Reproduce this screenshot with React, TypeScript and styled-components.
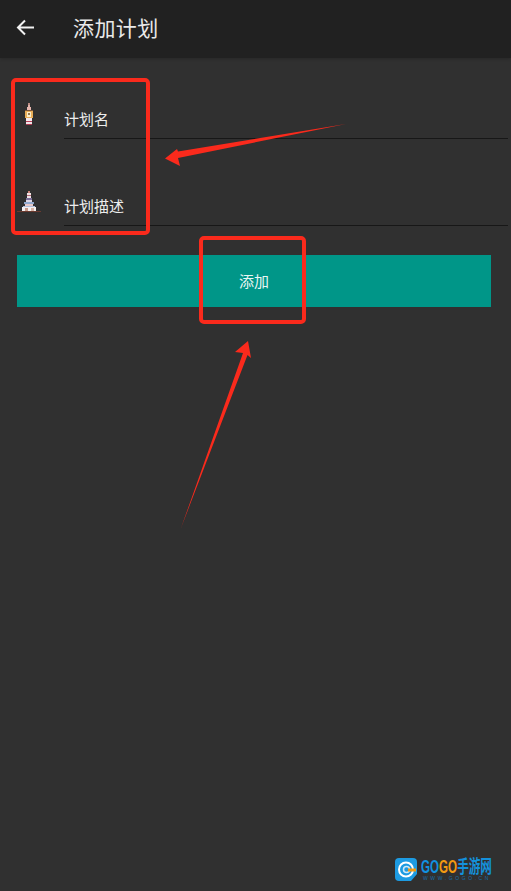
import React from "react";
import styled, { createGlobalStyle } from "styled-components";

const Global = createGlobalStyle`
  html, body { margin: 0; padding: 0; background: #303030; }
  body { font-family: "Roboto", "Noto Sans CJK SC", sans-serif; }
`;

const Screen = styled.div`
  position: relative;
  width: 511px;
  height: 891px;
  overflow: hidden;
  background: #303030;
`;

const Toolbar = styled.header`
  display: flex;
  align-items: center;
  height: 58px;
  padding-left: 16px;
  gap: 38px;
  background: #212121;
  box-shadow: 0 1px 3px rgba(0, 0, 0, 0.18);
`;

const BackIcon = styled.svg`
  width: 19px;
  height: 17px;
  flex: none;
  margin-bottom: 4px;
`;

const Title = styled.h1`
  margin: 0 0 4px;
  font: 400 21px/28px "Noto Sans CJK SC", sans-serif;
  letter-spacing: 0.4px;
  color: #e9e9e9;
`;

const Form = styled.main`
  display: flex;
  flex-direction: column;
  padding: 37px 3px 0 17px;
`;

const Row = styled.div`
  display: flex;
  height: 44px;
  margin-bottom: 43px;
`;

const PixelIcon = styled.svg`
  width: 26px;
  height: 26px;
  flex: none;
  margin: 8px 21px 0 0;
  shape-rendering: crispEdges;
  overflow: visible;
`;

const Field = styled.div`
  flex: 1;
  box-sizing: border-box;
  height: 44px;
  padding: 12px 0 0;
  border-bottom: 1px solid #171717;
  font: 400 15px/24px "Noto Sans CJK SC", sans-serif;
  color: #ececec;
`;

const SubmitButton = styled.button`
  display: block;
  width: 474px;
  height: 52px;
  margin: -14px 0 0;
  padding: 0;
  border: 0;
  background: #009688;
  color: #e8f5f3;
  font: 400 15px/52px "Noto Sans CJK SC", sans-serif;
`;

const Annotations = styled.svg`
  position: absolute;
  inset: 0;
  width: 511px;
  height: 891px;
  pointer-events: none;
`;

const Watermark = styled.div`
  position: absolute;
  left: 395px;
  top: 858px;
  display: flex;
  gap: 3px;
`;

const LogoMark = styled.svg`
  width: 22px;
  height: 23px;
  flex: none;
`;

const BrandColumn = styled.div`
  display: flex;
  flex-direction: column;
  margin-left: 1px;
`;

const BrandName = styled.div`
  display: flex;
  width: 110px;
  margin-top: 1px;
  font: 700 18px/16px "Liberation Sans", "Noto Sans CJK SC", sans-serif;
  color: #1192e0;
  white-space: nowrap;
  transform: scaleX(0.645);
  transform-origin: left center;
`;

const BrandAccent = styled.span`
  color: #f39a12;
`;

const BrandHan = styled.span`
  color: #1491dc;
`;

const BrandUrl = styled.div`
  font: 400 5px/6px "Liberation Sans", sans-serif;
  letter-spacing: 2.6px;
  margin-left: 2px;
  color: #1a6ea8;
  white-space: nowrap;
`;

const Tower = () => (
  <g transform="translate(-1 0)">
    <rect x="12" y="0" width="2" height="2" fill="#b98a80" />
    <rect x="12" y="2" width="2" height="2" fill="#e3b3ab" />
    <rect x="11" y="4" width="4" height="3" fill="#e8b8b0" />
    <rect x="9" y="7" width="8" height="1" fill="#7d5638" />
    <rect x="9" y="8" width="8" height="7" fill="#e8ae58" />
    <rect x="11" y="9" width="4" height="5" fill="#fbeecb" />
    <rect x="12" y="10" width="2" height="2" fill="#9a7a50" />
    <rect x="10" y="15" width="6" height="3" fill="#f4e8ec" />
    <rect x="10" y="18" width="6" height="1" fill="#b53c56" />
    <rect x="10" y="19" width="6" height="2" fill="#f0e4e8" />
    <rect x="10" y="21" width="6" height="1" fill="#a83a50" />
  </g>
);

const Pagoda = () => (
  <g transform="translate(-1 0)">
    <rect x="12" y="1" width="2" height="2" fill="#c9827a" />
    <rect x="11" y="3" width="4" height="2" fill="#f1e4e4" />
    <rect x="11" y="5" width="4" height="1" fill="#b96a78" />
    <rect x="11" y="6" width="4" height="2" fill="#efe6ea" />
    <rect x="10" y="8" width="6" height="2" fill="#7d6f98" />
    <rect x="10" y="10" width="6" height="2" fill="#dcd6e6" />
    <rect x="8" y="12" width="10" height="2" fill="#8fa8cc" />
    <rect x="9" y="14" width="8" height="2" fill="#e6c8c8" />
    <rect x="7" y="16" width="12" height="1" fill="#b0c0dc" />
    <rect x="6" y="17" width="14" height="4" fill="#f4efef" />
    <rect x="9" y="18" width="3" height="3" fill="#c79a8a" />
    <rect x="15" y="18" width="3" height="3" fill="#d7b4a6" />
    <rect x="1" y="21" width="24" height="1" fill="#6a3a30" />
  </g>
);

export default function App() {
  return (
    <Screen>
      <Global />
      <Toolbar>
        <BackIcon viewBox="0 0 19 17" fill="none" stroke="#f2f2f2" strokeWidth="2">
          <path d="M18 8.5H2M9 1.5 2 8.5l7 7" />
        </BackIcon>
        <Title>添加计划</Title>
      </Toolbar>
      <Form>
        <Row>
          <PixelIcon viewBox="0 0 26 26"><Tower /></PixelIcon>
          <Field>计划名</Field>
        </Row>
        <Row>
          <PixelIcon viewBox="0 0 26 26"><Pagoda /></PixelIcon>
          <Field>计划描述</Field>
        </Row>
        <SubmitButton>添加</SubmitButton>
      </Form>

      <Annotations viewBox="0 0 511 891">
        <rect x="13" y="80" width="135" height="153" rx="3" fill="none" stroke="#fa2a1c" strokeWidth="4" />
        <rect x="201" y="238" width="103" height="84" rx="3" fill="none" stroke="#fa2a1c" strokeWidth="4" />
        <path d="M346 124 178 151.500 177 149 165 158.500 180 166 178 158Z" fill="#fa2a1c" />
        <path d="M181 528 243 353 235 352 248 341 251 358 247.500 355Z" fill="#fa2a1c" />
      </Annotations>

      <Watermark>
        <LogoMark viewBox="0 0 22 23">
          <path d="M4 0h14a4 4 0 0 1 4 4v12l-6 7H4a4 4 0 0 1-4-4V4a4 4 0 0 1 4-4Z" fill="#1d9be2" />
          <circle cx="11" cy="11.500" r="7" fill="none" stroke="#fff" strokeWidth="2" />
          <circle cx="11.500" cy="11.500" r="3" fill="none" stroke="#cfe9f8" strokeWidth="1.500" />
          <path d="M13 10.500h8v3h-8Z" fill="#f39a12" />
        </LogoMark>
        <BrandColumn>
          <BrandName>
            GO<BrandAccent>GO</BrandAccent>
            <BrandHan>手游网</BrandHan>
          </BrandName>
          <BrandUrl>WWW.GOGO.CN</BrandUrl>
        </BrandColumn>
      </Watermark>
    </Screen>
  );
}
